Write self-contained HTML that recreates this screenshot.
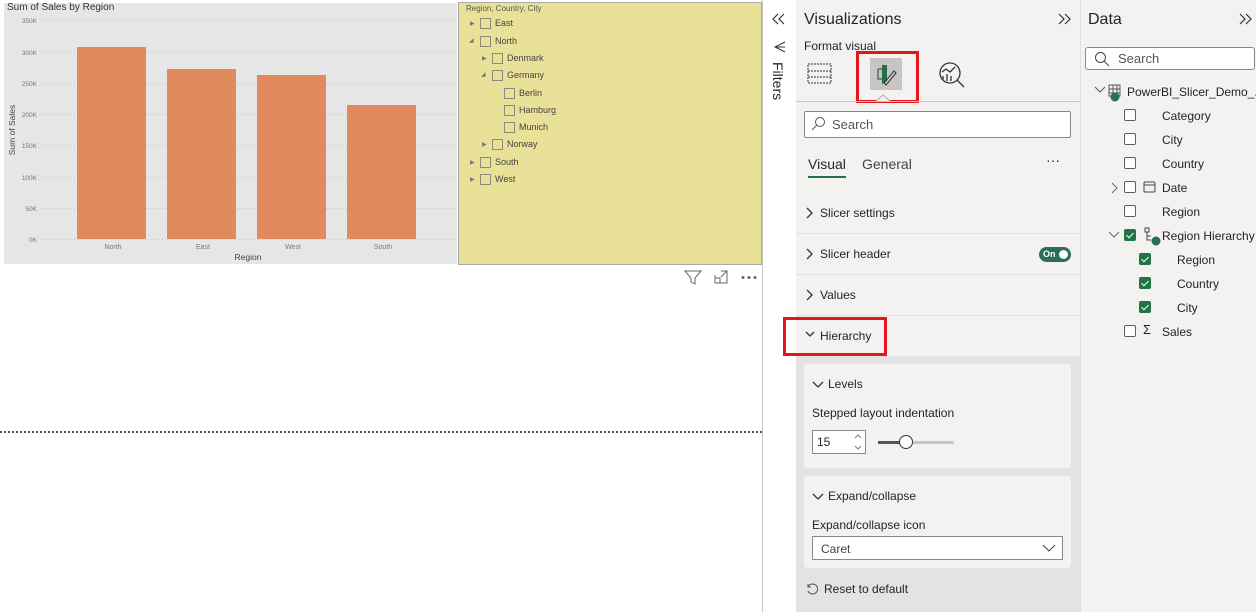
<!DOCTYPE html>
<html><head><meta charset="utf-8"><style>
*{box-sizing:border-box;margin:0;padding:0}
body{width:1256px;height:612px;overflow:hidden;background:#fff;font-family:"Liberation Sans",sans-serif;color:#252423;position:relative}
.a{position:absolute}
.t{position:absolute;white-space:nowrap}
.cb{position:absolute;width:11px;height:11px;border:1px solid #8a8a80}
.dcb{position:absolute;width:12px;height:12px;border:1px solid #605e5c;border-radius:2px;background:#fff}
.dcb.on{background:#217346;border-color:#217346}
.dcb.on::after{content:"";position:absolute;left:3px;top:1px;width:3px;height:6px;border:solid #fff;border-width:0 1.5px 1.5px 0;transform:rotate(45deg)}
.sec{position:absolute;left:796px;width:284px;height:41px;border-bottom:1px solid #e1dfdd}
</style></head><body>
<!-- chart -->
<div class="a" style="left:4px;top:3px;width:453px;height:261px;background:#e6e6e6"></div>
<div class="t" style="left:7px;top:2px;font-size:10px;color:#333">Sum of Sales by Region</div>
<svg class="a" style="left:0;top:0" width="460" height="265">
<g stroke="#bbb" stroke-dasharray="1 3" stroke-width="1">
<line x1="42" x2="455" y1="20.5" y2="20.5"/><line x1="42" x2="455" y1="52.5" y2="52.5"/><line x1="42" x2="455" y1="83.5" y2="83.5"/><line x1="42" x2="455" y1="114.5" y2="114.5"/><line x1="42" x2="455" y1="145.5" y2="145.5"/><line x1="42" x2="455" y1="177.5" y2="177.5"/><line x1="42" x2="455" y1="208.5" y2="208.5"/><line x1="42" x2="455" y1="239.5" y2="239.5"/>
</g>
<g font-size="6.5" fill="#777" text-anchor="end" font-family="Liberation Sans">
<text x="37" y="23">350K</text><text x="37" y="55">300K</text><text x="37" y="86">250K</text><text x="37" y="117">200K</text><text x="37" y="148">150K</text><text x="37" y="180">100K</text><text x="37" y="211">50K</text><text x="37" y="242">0K</text>
</g>
<g fill="#e08a5e">
<rect x="77" y="47" width="69" height="192"/><rect x="167" y="69" width="69" height="170"/><rect x="257" y="75" width="69" height="164"/><rect x="347" y="105" width="69" height="134"/>
</g>
<g font-size="7" fill="#777" text-anchor="middle" font-family="Liberation Sans">
<text x="113" y="249">North</text><text x="203" y="249">East</text><text x="293" y="249">West</text><text x="383" y="249">South</text>
</g>
<text x="248" y="260" font-size="8.5" fill="#444" text-anchor="middle" font-family="Liberation Sans">Region</text>
<text transform="translate(15,130) rotate(-90)" font-size="8.5" fill="#444" text-anchor="middle" font-family="Liberation Sans">Sum of Sales</text>
</svg>
<!-- slicer -->
<div class="a" style="left:458px;top:2px;width:304px;height:263px;background:#e9e197;border:1px solid #aaa"></div>
<div class="t" style="left:466px;top:4px;font-size:8px;color:#555">Region, Country, City</div>
<div style="font-size:9px;color:#444">
<div class="t" style="left:470px;top:20px;font-size:6px;color:#777">▶</div><div class="cb" style="left:480px;top:18px"></div><div class="t" style="left:495px;top:18px">East</div>
<div class="t" style="left:469px;top:37px;font-size:6px;color:#777">◢</div><div class="cb" style="left:480px;top:36px"></div><div class="t" style="left:495px;top:36px">North</div>
<div class="t" style="left:482px;top:55px;font-size:6px;color:#777">▶</div><div class="cb" style="left:492px;top:53px"></div><div class="t" style="left:507px;top:53px">Denmark</div>
<div class="t" style="left:481px;top:71px;font-size:6px;color:#777">◢</div><div class="cb" style="left:492px;top:70px"></div><div class="t" style="left:507px;top:70px">Germany</div>
<div class="cb" style="left:504px;top:88px"></div><div class="t" style="left:519px;top:88px">Berlin</div>
<div class="cb" style="left:504px;top:105px"></div><div class="t" style="left:519px;top:105px">Hamburg</div>
<div class="cb" style="left:504px;top:122px"></div><div class="t" style="left:519px;top:122px">Munich</div>
<div class="t" style="left:482px;top:141px;font-size:6px;color:#777">▶</div><div class="cb" style="left:492px;top:139px"></div><div class="t" style="left:507px;top:139px">Norway</div>
<div class="t" style="left:470px;top:159px;font-size:6px;color:#777">▶</div><div class="cb" style="left:480px;top:157px"></div><div class="t" style="left:495px;top:157px">South</div>
<div class="t" style="left:470px;top:176px;font-size:6px;color:#777">▶</div><div class="cb" style="left:480px;top:174px"></div><div class="t" style="left:495px;top:174px">West</div>
</div>
<svg class="a" style="left:680px;top:268px" width="80" height="20" fill="none" stroke="#666" stroke-width="1">
<path d="M5 3h16l-6 7v6l-4-2v-4z"/><path d="M35 7v8h12v-12h-6"/><path d="M35 10h5v5"/><path d="M41 9l6-6M44 3h3v3"/>
<circle cx="63" cy="9.5" r="1" fill="#666"/><circle cx="69" cy="9.5" r="1" fill="#666"/><circle cx="75" cy="9.5" r="1" fill="#666"/>
</svg>
<div class="a" style="left:0;top:431px;width:762px;height:2px;border-top:2px dotted #555"></div>
<div class="a" style="left:762px;top:0;width:1px;height:612px;background:#c8c6c4"></div>
<!-- filters strip -->
<svg class="a" style="left:772px;top:13px" width="14" height="12" fill="none" stroke="#333" stroke-width="1.2"><path d="M6 1l-5 5 5 5M12 1l-5 5 5 5"/></svg>
<svg class="a" style="left:773px;top:40px" width="14" height="14" fill="none" stroke="#333"><path d="M12 2l-10 5 10 5M2 7l10 0" stroke-width="1"/></svg>
<div class="t" style="left:786px;top:62px;font-size:14px;transform-origin:0 0;transform:rotate(90deg);color:#252423">Filters</div>
<!-- viz pane -->
<div class="a" style="left:796px;top:0;width:285px;height:612px;background:#f3f2f1"></div>
<div class="a" style="left:1080px;top:0;width:1px;height:612px;background:#e1dfdd"></div>
<div class="t" style="left:804px;top:11px;font-size:16px;color:#252423">Visualizations</div>
<svg class="a" style="left:1058px;top:13px" width="14" height="12" fill="none" stroke="#333" stroke-width="1.2"><path d="M1 1l5 5-5 5M7 1l5 5-5 5"/></svg>
<div class="t" style="left:804px;top:39px;font-size:12px">Format visual</div>
<svg class="a" style="left:806px;top:60px" width="28" height="28" fill="none" stroke="#333" stroke-dasharray="2 1"><rect x="2" y="4" width="23" height="19"/><line x1="2" x2="25" y1="11" y2="11"/><line x1="2" x2="25" y1="17" y2="17"/></svg>
<div class="a" style="left:870px;top:58px;width:32px;height:32px;background:#c8c6c4"></div>
<svg class="a" style="left:874px;top:61px" width="26" height="26"><path d="M4 8h4M4 8v10h4" stroke="#333" fill="none"/><path d="M8 4h5v16l-5 3z" fill="#217346"/><path d="M10 22l10-12 2 2-10 12z" fill="none" stroke="#333"/></svg>
<div class="a" style="left:856px;top:51px;width:63px;height:52px;border:3px solid #e3161b"></div>
<svg class="a" style="left:937px;top:60px" width="30" height="28" fill="none" stroke="#333" stroke-width="1.3"><circle cx="13" cy="13" r="10"/><path d="M20 20l7 7"/><path d="M6 16v4M10 14v7M14 16v5M5 12l4-3 4 3 5-5"/></svg>
<div class="a" style="left:796px;top:101px;width:284px;height:1px;background:#c8c6c4"></div>
<svg class="a" style="left:876px;top:94px" width="14" height="8"><path d="M0 7l7-6 7 6" fill="#f3f2f1" stroke="#aaa"/></svg>
<div class="a" style="left:804px;top:111px;width:267px;height:27px;border:1px solid #8a8886;border-radius:2px;background:#fff"></div>
<svg class="a" style="left:810px;top:116px" width="16" height="16" fill="none" stroke="#555"><circle cx="10" cy="6" r="4.5"/><path d="M7 9l-5 5"/></svg>
<div class="t" style="left:832px;top:117px;font-size:13px;color:#555">Search</div>
<div class="t" style="left:808px;top:156px;font-size:14px">Visual</div>
<div class="a" style="left:808px;top:176px;width:38px;height:2px;background:#217346"></div>
<div class="t" style="left:862px;top:156px;font-size:14px;color:#444">General</div>
<div class="t" style="left:1046px;top:152px;font-size:14px">···</div>
<div class="sec" style="top:193px"></div>
<div class="sec" style="top:234px"></div>
<div class="sec" style="top:275px"></div>
<svg class="a" style="left:805px;top:207px" width="10" height="130" fill="none" stroke="#333" stroke-width="1.3"><path d="M2 1l5 5-5 5M2 42l5 5-5 5M2 83l5 5-5 5M1 125l4 4 4-4"/></svg>
<div class="t" style="left:820px;top:206px;font-size:12px">Slicer settings</div>
<div class="t" style="left:820px;top:247px;font-size:12px">Slicer header</div>
<div class="a" style="left:1039px;top:247px;width:32px;height:15px;border-radius:8px;background:#2b6e59"></div>
<div class="t" style="left:1043px;top:249px;font-size:9px;color:#fff;font-weight:bold">On</div>
<div class="a" style="left:1059px;top:250px;width:9px;height:9px;border-radius:5px;background:#fff"></div>
<div class="t" style="left:820px;top:288px;font-size:12px">Values</div>
<div class="t" style="left:820px;top:329px;font-size:12px">Hierarchy</div>
<div class="a" style="left:783px;top:317px;width:104px;height:39px;border:3px solid #e3161b"></div>
<div class="a" style="left:796px;top:356px;width:284px;height:256px;background:#e5e3e1"></div>
<div class="a" style="left:804px;top:364px;width:267px;height:104px;background:#f3f2f1;border-radius:4px"></div>
<svg class="a" style="left:812px;top:380px" width="12" height="10"><path d="M1 2l5 5 5-5" stroke="#333" fill="none" stroke-width="1.3"/></svg>
<div class="t" style="left:828px;top:377px;font-size:12px">Levels</div>
<div class="t" style="left:812px;top:406px;font-size:12px">Stepped layout indentation</div>
<div class="a" style="left:812px;top:430px;width:54px;height:24px;border:1px solid #8a8886;background:#fff"></div>
<div class="t" style="left:817px;top:435px;font-size:12px">15</div>
<svg class="a" style="left:853px;top:433px" width="10" height="18" fill="none" stroke="#777"><path d="M2 5l3-3 3 3M2 13l3 3 3-3"/></svg>
<div class="a" style="left:878px;top:441px;width:76px;height:3px;background:#c8c6c4;border-radius:2px"></div>
<div class="a" style="left:878px;top:441px;width:28px;height:3px;background:#555"></div>
<div class="a" style="left:899px;top:435px;width:14px;height:14px;border-radius:7px;border:1.5px solid #333;background:#fff"></div>
<div class="a" style="left:804px;top:476px;width:267px;height:92px;background:#f3f2f1;border-radius:4px"></div>
<svg class="a" style="left:812px;top:492px" width="12" height="10"><path d="M1 2l5 5 5-5" stroke="#333" fill="none" stroke-width="1.3"/></svg>
<div class="t" style="left:828px;top:489px;font-size:12px">Expand/collapse</div>
<div class="t" style="left:812px;top:518px;font-size:12px">Expand/collapse icon</div>
<div class="a" style="left:812px;top:536px;width:251px;height:24px;border:1px solid #8a8886;background:#fff"></div>
<div class="t" style="left:821px;top:542px;font-size:12px;color:#444">Caret</div>
<svg class="a" style="left:1042px;top:543px" width="14" height="10"><path d="M1 2l6 6 6-6" stroke="#444" fill="none"/></svg>
<svg class="a" style="left:805px;top:582px" width="14" height="14" fill="none" stroke="#555"><path d="M3 5a5 5 0 1 1 0 4M3 2v3h3"/></svg>
<div class="t" style="left:824px;top:582px;font-size:12px">Reset to default</div>
<!-- data pane -->
<div class="a" style="left:1081px;top:0;width:175px;height:612px;background:#f3f2f1"></div>
<div class="t" style="left:1088px;top:11px;font-size:16px">Data</div>
<svg class="a" style="left:1239px;top:13px" width="14" height="12" fill="none" stroke="#333" stroke-width="1.2"><path d="M1 1l5 5-5 5M7 1l5 5-5 5"/></svg>
<div class="a" style="left:1085px;top:47px;width:170px;height:23px;border:1px solid #8a8886;border-radius:3px;background:#fff"></div>
<svg class="a" style="left:1094px;top:51px" width="16" height="16" fill="none" stroke="#444"><circle cx="6.5" cy="6.5" r="5"/><path d="M10 10l5 5"/></svg>
<div class="t" style="left:1118px;top:51px;font-size:13px;color:#555">Search</div>
<div style="font-size:12px">
<svg class="a" style="left:1094px;top:84px" width="40" height="22" fill="none" stroke="#555"><path d="M1 3l5 5 5-5"/><rect x="15" y="1" width="11" height="11"/><path d="M15 5h11M15 9h11M19 1v11M23 1v11"/><circle cx="21" cy="13" r="4.5" fill="#2b6e59" stroke="none"/></svg>
<div class="t" style="left:1127px;top:85px">PowerBI_Slicer_Demo_...</div>
<div class="dcb" style="left:1124px;top:109px"></div><div class="t" style="left:1162px;top:109px">Category</div>
<div class="dcb" style="left:1124px;top:133px"></div><div class="t" style="left:1162px;top:133px">City</div>
<div class="dcb" style="left:1124px;top:157px"></div><div class="t" style="left:1162px;top:157px">Country</div>
<svg class="a" style="left:1110px;top:182px" width="8" height="12" fill="none" stroke="#666"><path d="M2 1l5 5-5 5"/></svg>
<div class="dcb" style="left:1124px;top:181px"></div>
<svg class="a" style="left:1143px;top:180px" width="13" height="13" fill="none" stroke="#444"><rect x="1" y="2" width="11" height="10" rx="1"/><path d="M1 5h11"/></svg>
<div class="t" style="left:1162px;top:181px">Date</div>
<div class="dcb" style="left:1124px;top:205px"></div><div class="t" style="left:1162px;top:205px">Region</div>
<svg class="a" style="left:1108px;top:231px" width="12" height="8" fill="none" stroke="#666"><path d="M1 1l5 5 5-5"/></svg>
<div class="dcb on" style="left:1124px;top:229px"></div>
<svg class="a" style="left:1143px;top:227px" width="20" height="20" fill="none" stroke="#444"><rect x="2" y="1" width="4" height="4"/><path d="M4 5v8h4M4 9h4"/><circle cx="13" cy="14" r="4.5" fill="#2b6e59" stroke="none"/></svg>
<div class="t" style="left:1162px;top:229px">Region Hierarchy</div>
<div class="dcb on" style="left:1139px;top:253px"></div><div class="t" style="left:1177px;top:253px">Region</div>
<div class="dcb on" style="left:1139px;top:277px"></div><div class="t" style="left:1177px;top:277px">Country</div>
<div class="dcb on" style="left:1139px;top:301px"></div><div class="t" style="left:1177px;top:301px">City</div>
<div class="dcb" style="left:1124px;top:325px"></div><div class="t" style="left:1143px;top:322px;font-size:13px">Σ</div><div class="t" style="left:1162px;top:325px">Sales</div>
</div>
</body></html>
